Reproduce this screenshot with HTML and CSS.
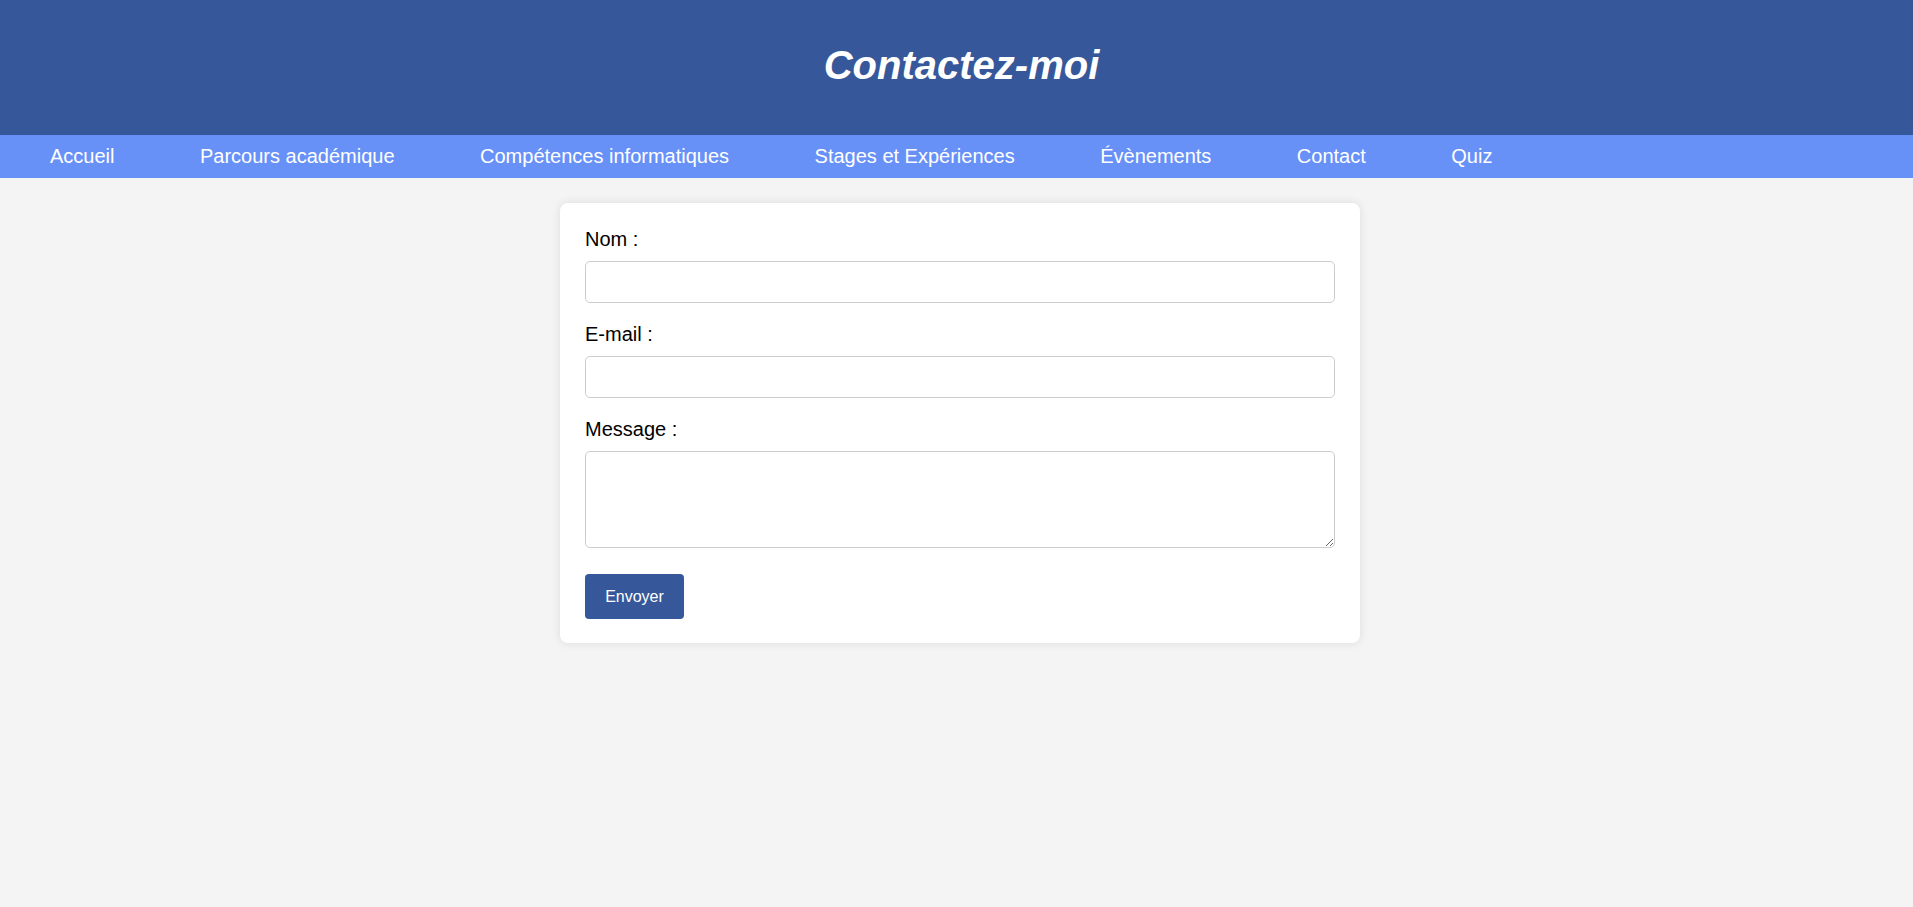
FILE: index.html
```html
<!DOCTYPE html>
<html lang="fr">
<head>
<meta charset="utf-8">
<title>Contactez-moi</title>
<link rel="stylesheet" href="styles.css">
</head>
<body>
<header class="site-header">
  <h1 class="site-title">Contactez-moi</h1>
</header>
<nav class="main-nav">
  <a href="#">Accueil</a>
  <a href="#">Parcours académique</a>
  <a href="#">Compétences informatiques</a>
  <a href="#">Stages et Expériences</a>
  <a href="#">Évènements</a>
  <a href="#">Contact</a>
  <a href="#">Quiz</a>
</nav>
<main class="content">
  <form class="contact-card">
    <label class="field-label" for="nom">Nom :</label>
    <input class="field-input" type="text" id="nom">
    <label class="field-label" for="email">E-mail :</label>
    <input class="field-input" type="email" id="email">
    <label class="field-label" for="message">Message :</label>
    <textarea class="field-area" id="message"></textarea>
    <button class="submit-btn" type="button">Envoyer</button>
  </form>
</main>
</body>
</html>
```
FILE: styles.css
```css
html, body {
  margin: 0;
  padding: 0;
}
body {
  background: #f4f4f4;
  font-family: "Liberation Sans", Arial, sans-serif;
  color: #000;
  min-height: 907px;
}
.site-header {
  background: #36589a;
  height: 135px;
  box-sizing: border-box;
  padding-left: 10px;
  display: flex;
  align-items: center;
  justify-content: center;
}
.site-title {
  margin: 0;
  color: #fff;
  font-size: 40px;
  font-weight: bold;
  font-style: italic;
  line-height: 46px;
  position: relative;
  top: -3px;
}
.main-nav {
  background: #6891f8;
  height: 43px;
  display: flex;
  align-items: center;
  gap: 85.5px;
  padding-left: 50px;
}
.main-nav a {
  color: #fff;
  text-decoration: none;
  font-size: 20px;
  line-height: 23px;
}
.content {
  padding-top: 25px;
  padding-left: 7px;
}
.contact-card {
  width: 800px;
  box-sizing: border-box;
  margin: 0 auto;
  background: #fff;
  border-radius: 8px;
  box-shadow: 0 0 10px rgba(0, 0, 0, 0.1);
  padding: 25px 25px 24px;
  display: flex;
  flex-direction: column;
}
.field-label {
  display: block;
  font-size: 20px;
  line-height: 23px;
  margin-bottom: 10px;
}
.field-input,
.field-area {
  display: block;
  width: 100%;
  box-sizing: border-box;
  border: 1px solid #ccc;
  border-radius: 5px;
  background: #fff;
  font-family: "Liberation Sans", Arial, sans-serif;
  font-size: 16px;
  padding: 10px;
  margin: 0 0 20px;
}
.field-input {
  height: 42px;
}
.field-area {
  height: 97px;
  resize: vertical;
  margin-bottom: 26px;
}
.submit-btn {
  align-self: flex-start;
  background: #36589a;
  color: #fff;
  border: none;
  border-radius: 4px;
  width: 99px;
  height: 45px;
  font-family: "Liberation Sans", Arial, sans-serif;
  font-size: 16px;
  cursor: pointer;
}
```
